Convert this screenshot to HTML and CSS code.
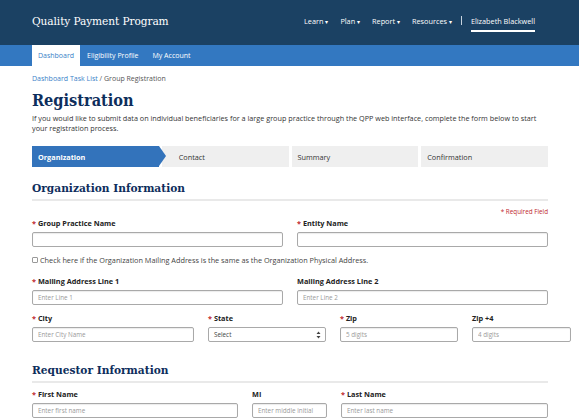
FILE: index.html
```html
<!DOCTYPE html>
<html lang="en">
<head>
<meta charset="utf-8">
<title>Registration - Quality Payment Program</title>
<link rel="stylesheet" href="styles.css">
</head>
<body>
<header class="topbar">
  <div class="brand">Quality Payment Program</div>
  <nav class="mainnav">
    <span class="navitem">Learn <span class="caret">▾</span></span>
    <span class="navitem">Plan <span class="caret">▾</span></span>
    <span class="navitem">Report <span class="caret">▾</span></span>
    <span class="navitem">Resources <span class="caret">▾</span></span>
    <span class="sep"></span>
    <span class="navitem user">Elizabeth Blackwell</span>
  </nav>
</header>
<nav class="subnav">
  <span class="tab active">Dashboard</span>
  <span class="tab">Eligibility Profile</span>
  <span class="tab">My Account</span>
</nav>
<main class="content">
  <div class="crumbs"><a class="crumb-link">Dashboard Task List</a> / Group Registration</div>
  <h1 class="title">Registration</h1>
  <p class="intro">If you would like to submit data on individual beneficiaries for a large group practice through the QPP web interface, complete the form below to start your registration process.</p>

  <div class="stepper">
    <div class="step current">Organization</div>
    <div class="step next">Contact</div>
    <div class="step">Summary</div>
    <div class="step">Confirmation</div>
  </div>

  <h2 class="section-title">Organization Information</h2>
  <div class="req-note"><span class="star">*</span> Required Field</div>

  <div class="row two">
    <div class="field"><label><span class="star">*</span> Group Practice Name</label><input type="text"></div>
    <div class="field"><label><span class="star">*</span> Entity Name</label><input type="text"></div>
  </div>

  <div class="check"><span class="box"></span>Check here if the Organization Mailing Address is the same as the Organization Physical Address.</div>

  <div class="row two">
    <div class="field"><label><span class="star">*</span> Mailing Address Line 1</label><input type="text" placeholder="Enter Line 1"></div>
    <div class="field"><label>Mailing Address Line 2</label><input type="text" placeholder="Enter Line 2"></div>
  </div>

  <div class="row four">
    <div class="field"><label><span class="star">*</span> City</label><input type="text" placeholder="Enter City Name"></div>
    <div class="field"><label><span class="star">*</span> State</label>
      <div class="select"><span>Select</span>
        <svg width="5" height="8" viewBox="0 0 5 8"><path d="M2.5 0.5L4.5 3H0.5Z M2.5 7.5L4.5 5H0.5Z" fill="#444"/></svg>
      </div>
    </div>
    <div class="field"><label><span class="star">*</span> Zip</label><input type="text" placeholder="5 digits"></div>
    <div class="field"><label>Zip +4</label><input type="text" placeholder="4 digits"></div>
  </div>

  <h2 class="section-title req-title">Requestor Information</h2>

  <div class="row three">
    <div class="field"><label><span class="star">*</span> First Name</label><input type="text" placeholder="Enter first name"></div>
    <div class="field"><label>MI</label><input type="text" placeholder="Enter middle initial"></div>
    <div class="field"><label><span class="star">*</span> Last Name</label><input type="text" placeholder="Enter last name"></div>
  </div>
</main>
</body>
</html>
```

FILE: styles.css
```css
* { box-sizing: border-box; }
html, body { margin: 0; padding: 0; }
body {
  font-family: "Open Sans", "Noto Sans", sans-serif;
  color: #333;
  background: #fff;
  width: 579px;
  overflow: hidden;
}
.topbar {
  height: 45px;
  background: #1b4163;
  display: flex;
  align-items: center;
  justify-content: space-between;
  padding: 0 44px 4px 32px;
  color: #fff;
}
.brand {
  font-family: "DejaVu Serif Condensed", "DejaVu Serif", serif;
  font-stretch: condensed;
  font-size: 11.8px;
  letter-spacing: -0.1px;
}
.mainnav {
  display: flex;
  align-items: center;
  font-size: 7.3px;
}
.navitem { margin-left: 12px; white-space: nowrap; }
.navitem:first-child { margin-left: 0; }
.caret { font-size: 6px; }
.sep {
  width: 1px;
  height: 9px;
  background: #c8d3de;
  margin-left: 9px;
}
.user {
  margin-left: 9px;
  position: relative;
}
.user::after {
  content: "";
  position: absolute;
  left: 0; right: 0;
  bottom: -6px;
  height: 1.5px;
  background: #fff;
}
.subnav {
  height: 21px;
  background: #3378c1;
  display: flex;
  padding-left: 32px;
  font-size: 7px;
  color: #fff;
}
.tab {
  display: flex;
  align-items: center;
  padding: 0 7px;
}
.tab.active {
  background: #fff;
  color: #3a7fc8;
  width: 48px;
  justify-content: center;
  padding: 0;
}
.content { padding: 0 31px 0 32px; }
.crumbs {
  margin-top: 8px;
  font-size: 7px;
  line-height: 10px;
  color: #555;
}
.crumb-link { color: #3a7fc8; }
.title {
  font-family: "DejaVu Serif Condensed", "DejaVu Serif", serif;
  font-stretch: condensed;
  font-weight: bold;
  font-size: 16.2px;
  line-height: 24px;
  margin: 5px 0 0;
  color: #0e2e5c;
}
.intro {
  margin: 0;
  font-size: 7.25px;
  line-height: 10px;
  color: #333;
}
.stepper {
  margin-top: 13px;
  display: grid;
  grid-template-columns: repeat(4, 1fr);
  column-gap: 3px;
  height: 21px;
}
.step {
  background: #efefef;
  font-size: 7.3px;
  display: flex;
  align-items: center;
  padding-left: 6px;
  color: #333;
}
.step.current {
  background: #3373bb;
  color: #fff;
  font-weight: bold;
  position: relative;
  z-index: 1;
}
.step.current::after {
  content: "";
  position: absolute;
  left: 100%;
  top: 0;
  border-top: 10.5px solid transparent;
  border-bottom: 10.5px solid transparent;
  border-left: 7px solid #3373bb;
}
.step.next { padding-left: 17px; }
.section-title {
  font-family: "DejaVu Serif Condensed", "DejaVu Serif", serif;
  font-stretch: condensed;
  font-weight: bold;
  font-size: 11.8px;
  line-height: 18px;
  color: #0e2e5c;
  margin: 12px 0 0;
  padding-bottom: 2px;
  border-bottom: 2px solid #e9e9e9;
}
.req-title { margin-top: 19px; }
.req-note {
  margin-top: 6px;
  text-align: right;
  font-size: 6.3px;
  line-height: 9px;
  color: #c0272d;
}
.star { color: #c0272d; }
.row {
  display: grid;
  column-gap: 14px;
}
.row.two { grid-template-columns: 1fr 1fr; margin-top: 2px; }
.row.four { grid-template-columns: 162px 118px 118px 1fr; margin-top: 8px; }
.row.three { grid-template-columns: 206px 75px 1fr; margin-top: 6px; }
.check + .row { margin-top: 11px; }
.field {
  display: flex;
  flex-direction: column;
  gap: 4px;
}
.field label {
  font-size: 7.3px;
  line-height: 10px;
  font-weight: bold;
  color: #222;
}
.field input, .select {
  height: 15px;
  border: 1px solid #a9a9a9;
  border-radius: 2px;
  background: #fff;
  font-family: inherit;
  font-size: 6.3px;
  padding: 0 5px;
  margin: 0;
  color: #333;
  box-shadow: inset 0 1px 1px rgba(0,0,0,0.08);
}
.field input::placeholder { color: #9a9a9a; }
.select {
  display: flex;
  align-items: center;
  justify-content: space-between;
  padding: 0 4px 0 5px;
  color: #444;
  box-shadow: none;
}
.check {
  margin-top: 8px;
  display: flex;
  align-items: center;
  font-size: 7.3px;
  line-height: 10px;
  color: #444;
}
.box {
  width: 6px;
  height: 6px;
  border: 1px solid #999;
  border-radius: 1px;
  margin-right: 2px;
  background: #fff;
}
```
